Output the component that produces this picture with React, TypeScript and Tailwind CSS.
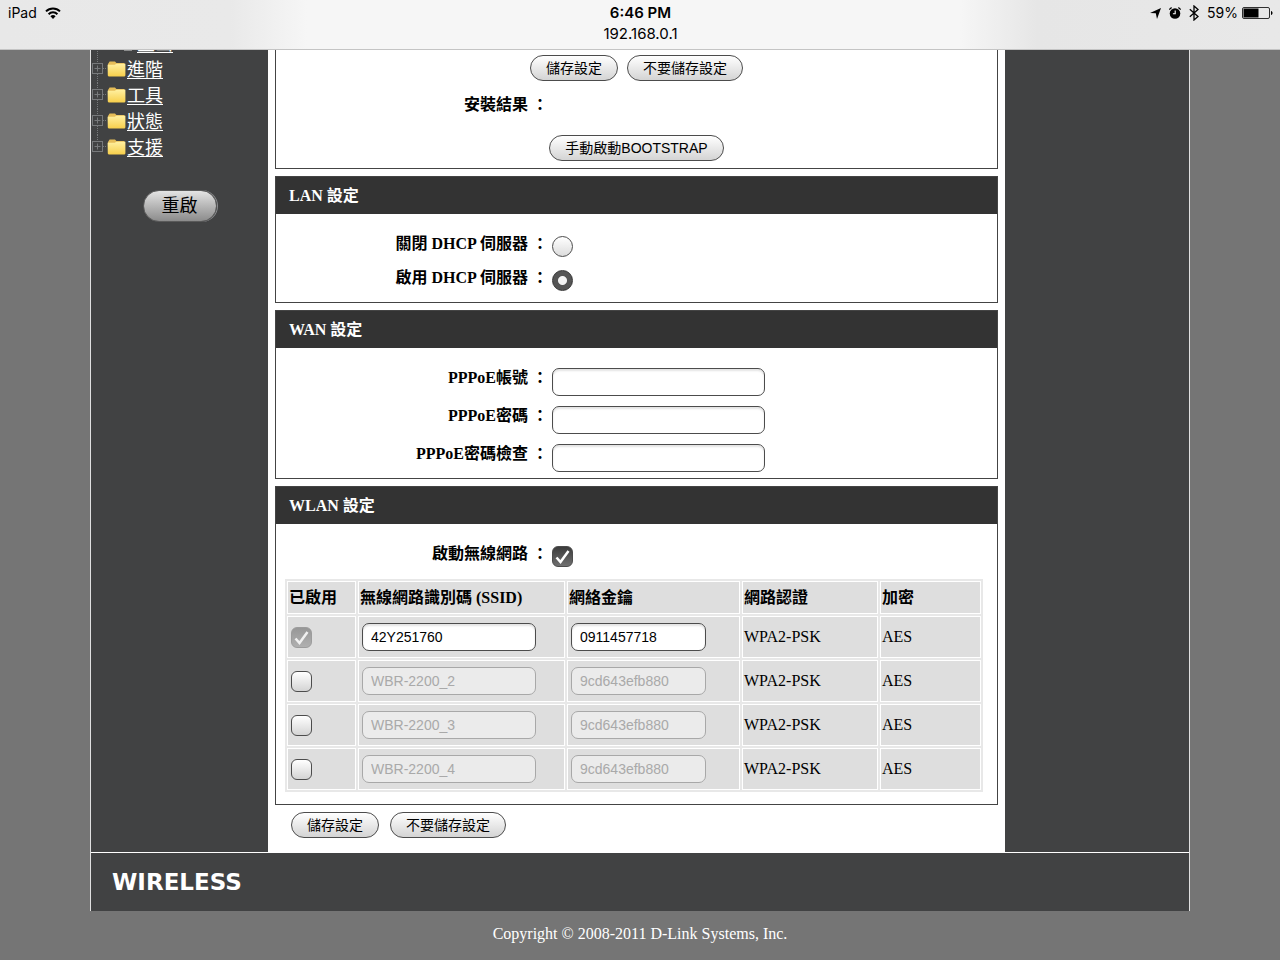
import React, { useState } from 'react';

const NAV_ITEMS = ['進階', '工具', '狀態', '支援'];

const COLUMNS = [
  { title: '已啟用', width: 'w-[69px]' },
  { title: '無線網路識別碼 (SSID)', width: 'w-[207px]' },
  { title: '網絡金鑰', width: 'w-[173px]' },
  { title: '網路認證', width: 'w-[136px]' },
  { title: '加密', width: '' },
];

interface Network {
  ssid: string;
  networkKey: string;
  enabled: boolean;
  locked: boolean;
}

const NETWORKS: Network[] = [
  { ssid: '42Y251760', networkKey: '0911457718', enabled: true, locked: true },
  { ssid: 'WBR-2200_2', networkKey: '9cd643efb880', enabled: false, locked: false },
  { ssid: 'WBR-2200_3', networkKey: '9cd643efb880', enabled: false, locked: false },
  { ssid: 'WBR-2200_4', networkKey: '9cd643efb880', enabled: false, locked: false },
];

const StatusBar: React.FC = () => (
  <header className="grid h-[50px] grid-cols-3 items-start border-b border-[#c4c4c4] bg-[linear-gradient(to_right,#e8e8e8_0%,#e9e9e9_18%,#f6f6f6_24%,#f6f6f6_75%,#e6e6e6_81%,#e8e8e8_100%)] pt-1 pr-[7px] pl-2 font-[Inter,sans-serif] text-sm leading-[18px] text-black">
    <div className="flex items-center gap-2">
      <span>iPad</span>
      <svg width="16" height="12" viewBox="0 0 16 12" fill="none" stroke="#000" strokeWidth="2">
        <path d="M1 4.4a10 10 0 0 1 14 0" />
        <path d="M3.6 7.2a6.2 6.2 0 0 1 8.8 0" />
        <path d="M8 12L5.4 9.3a3.7 3.7 0 0 1 5.2 0z" fill="#000" stroke="none" />
      </svg>
    </div>
    <div className="flex flex-col items-center text-[15px]">
      <span className="leading-[18px] font-semibold">6:46 PM</span>
      <span className="leading-6">192.168.0.1</span>
    </div>
    <div className="flex items-center justify-end gap-2">
      <svg width="11" height="11" viewBox="0 0 11 11">
        <path d="M11 0L7 11L5.8 5.2L0 5z" />
      </svg>
      <svg width="12" height="12" viewBox="0 0 12 12">
        <circle cx="6" cy="6.5" r="5.3" />
        <path d="M.3 2.6L2.6.5M11.7 2.6L9.4.5" stroke="#000" strokeWidth="1.2" />
        <path d="M6.2 3.4v3.4H3.9" stroke="#fff" strokeWidth="1.1" fill="none" />
      </svg>
      <svg width="10" height="16" viewBox="0 0 10 16" fill="none" stroke="#000" strokeWidth="1.3">
        <path d="M.8 4.3L9 11.5L5 15V1L9 4.5L.8 11.7" />
      </svg>
      <span>59%</span>
      <svg className="-ml-1" width="31" height="12" viewBox="0 0 31 12">
        <rect x=".5" y=".5" width="27" height="11" rx="1.5" fill="none" stroke="#000" strokeWidth=".8" />
        <rect x="1.5" y="1.5" width="15" height="9" />
        <path d="M29 4c2 .6 2 3.4 0 4z" />
      </svg>
    </div>
  </header>
);

const FolderIcon: React.FC = () => (
  <svg width="19" height="18" viewBox="0 0 19 18">
    <defs>
      <linearGradient id="folder" x1="0" y1="0" x2="0" y2="1">
        <stop offset="0" stopColor="#fff0a0" />
        <stop offset="1" stopColor="#f7cf4c" />
      </linearGradient>
    </defs>
    <path d="M1 3L2.6.6H8L9.4 2H17.5V7H1z" fill="#e6bd58" />
    <path d="M.6 3.8H7.8L9.4 2.8H18.4V14.6L17.6 15.4H1.6L.8 14.6z" fill="url(#folder)" />
  </svg>
);

const BranchIcon: React.FC<{ last: boolean }> = ({ last }) => (
  <svg width="16" height="26" viewBox="0 0 16 26" fill="none" stroke="#77797b">
    <path d={last ? 'M6.5 0V6' : 'M6.5 0V6M6.5 17V26'} strokeDasharray="1 1" />
    <path d="M12 11.5H16" strokeDasharray="1 1" />
    <rect x="1.5" y="6.5" width="10" height="10" />
    <path d="M3.5 11.5H9.5M6.5 8.5V14.5" />
  </svg>
);

const Sidebar: React.FC = () => (
  <nav className="w-[177px] shrink-0 font-[Liberation_Sans,Noto_Sans_CJK_TC,sans-serif]">
    {/* last child of the first branch, scrolled under the status bar */}
    <div className="flex h-[7px] items-end overflow-hidden">
      <svg width="46" height="26" viewBox="0 0 46 26" fill="none">
        <path d="M6.5 0V26" stroke="#77797b" strokeDasharray="1 1" />
        <path d="M33 4H41V19.5H33z" fill="#d8d8d8" />
      </svg>
      <a href="#logout" className="text-lg leading-[26px] text-white underline underline-offset-2">登出</a>
    </div>
    <ul>
      {NAV_ITEMS.map((item, index) => (
        <li key={item} className="flex h-[26px] items-center">
          <BranchIcon last={index === NAV_ITEMS.length - 1} />
          <FolderIcon />
          <a href={`#${item}`} className="pl-px text-lg leading-[26px] text-white underline underline-offset-2">
            {item}
          </a>
        </li>
      ))}
    </ul>
    <div className="flex justify-center pt-[29px]">
      <button
        type="button"
        className="h-8 rounded-full border border-[#5a5a5a] bg-linear-to-b from-[#e4e4e4] to-[#8c8c8c] px-[18px] text-lg leading-7 text-black shadow-[1px_0_0_0_#8c8e90]"
      >
        重啟
      </button>
    </div>
  </nav>
);

const PillButton: React.FC<{ children: React.ReactNode }> = ({ children }) => (
  <button
    type="button"
    className="h-[26px] rounded-full border border-[#4c4c4c] bg-linear-to-b from-white to-[#d4d4d4] px-[15px] font-[Liberation_Sans,Noto_Sans_CJK_TC,sans-serif] text-sm leading-6 text-black"
  >
    {children}
  </button>
);

const Panel: React.FC<{ title: string; children: React.ReactNode }> = ({ title, children }) => (
  <section className="border border-[#444]">
    <h2 className="bg-[#333] px-[13px] text-base leading-[37px] font-bold text-white">{title}</h2>
    {children}
  </section>
);

const labelClass = 'w-[272px] shrink-0 text-right text-base leading-6 font-bold';

interface FieldProps {
  id: string;
  label: string;
  children: React.ReactNode;
}

const Field: React.FC<FieldProps> = ({ id, label, children }) => (
  <div className="flex items-start">
    <label htmlFor={id} className={labelClass}>
      {label} ：
    </label>
    <div className="flex min-h-[27px] items-center pt-[2px] pl-1">{children}</div>
  </div>
);

const Radio: React.FC<{ id: string; checked: boolean; onChange: () => void }> = ({ id, checked, onChange }) => (
  <input
    id={id}
    type="radio"
    name="dhcp"
    checked={checked}
    onChange={onChange}
    className={`size-[21px] appearance-none rounded-full border ${
      checked
        ? 'border-[#333] bg-[radial-gradient(circle,#f4f4f4_0_4px,#555_5px)]'
        : 'border-[#4c4c4c] bg-linear-to-b from-white to-[#dcdcdc]'
    }`}
  />
);

interface TickBoxProps {
  id: string;
  label?: string;
  checked: boolean;
  disabled?: boolean;
  onChange: () => void;
}

const TickBox: React.FC<TickBoxProps> = ({ id, label, checked, disabled, onChange }) => (
  <span className="grid size-[21px]">
    <input
      id={id}
      type="checkbox"
      aria-label={label}
      checked={checked}
      disabled={disabled}
      onChange={onChange}
      className="col-start-1 row-start-1 size-[21px] appearance-none rounded-md border border-[#4c4c4c] bg-linear-to-b from-white to-[#d4d4d4] checked:from-[#3c3c3c] checked:to-[#707070] disabled:border-[#9c9c9c] disabled:from-[#979797] disabled:to-[#b0b0b0]"
    />
    {checked && (
      <svg
        className="pointer-events-none col-start-1 row-start-1"
        width="21"
        height="21"
        viewBox="0 0 21 21"
        fill="none"
        stroke={disabled ? '#f0f0f0' : '#fff'}
        strokeWidth="2.5"
      >
        <path d="M4.5 11.5L8.5 16L16.5 5" />
      </svg>
    )}
  </span>
);

const inputClass =
  'h-7 rounded-[7px] border border-[#4c4c4c] bg-white px-2 font-[Liberation_Sans,sans-serif] text-sm text-black shadow-[inset_0_2px_2px_#e4e4e4] disabled:border-[#a8a8a8] disabled:bg-[#ebebeb] disabled:text-[#a9a9a9] disabled:shadow-none';

const cellClass = 'border border-white bg-[#dedede] px-px text-left align-middle';

const App: React.FC = () => {
  const [dhcpEnabled, setDhcpEnabled] = useState(true);
  const [wirelessEnabled, setWirelessEnabled] = useState(true);
  const [networks, setNetworks] = useState(NETWORKS);

  const updateNetwork = (index: number, change: Partial<Network>) => {
    setNetworks(prev => prev.map((network, i) => (i === index ? { ...network, ...change } : network)));
  };

  return (
    <div className="min-h-screen bg-[#757575] font-[Liberation_Serif,Noto_Sans_CJK_TC,serif] text-black">
      <StatusBar />

      <div className="mx-auto max-w-[1100px] border-x border-[#e0e0e0] bg-[#414243]">
        <div className="flex">
          <Sidebar />

          <main className="flex min-w-0 grow flex-col gap-[7px] bg-white px-[7px] pb-[14px]">
            <section className="border border-t-0 border-[#444] pt-[5px] pb-[7px]">
              <div className="flex justify-center gap-[9px]">
                <PillButton>儲存設定</PillButton>
                <PillButton>不要儲存設定</PillButton>
              </div>
              <p className={`${labelClass} pt-3`}>安裝結果 ：</p>
              <div className="flex justify-center pt-[18px]">
                <PillButton>手動啟動BOOTSTRAP</PillButton>
              </div>
            </section>

            <Panel title="LAN 設定">
              <div className="flex flex-col gap-[7px] pt-[18px] pb-[9px]">
                <Field id="dhcp-off" label="關閉 DHCP 伺服器">
                  <Radio id="dhcp-off" checked={!dhcpEnabled} onChange={() => setDhcpEnabled(false)} />
                </Field>
                <Field id="dhcp-on" label="啟用 DHCP 伺服器">
                  <Radio id="dhcp-on" checked={dhcpEnabled} onChange={() => setDhcpEnabled(true)} />
                </Field>
              </div>
            </Panel>

            <Panel title="WAN 設定">
              <div className="flex flex-col gap-2 pt-[18px] pb-[6px]">
                <Field id="pppoe-user" label="PPPoE帳號">
                  <input id="pppoe-user" type="text" className={`${inputClass} w-[213px]`} />
                </Field>
                <Field id="pppoe-password" label="PPPoE密碼">
                  <input id="pppoe-password" type="password" className={`${inputClass} w-[213px]`} />
                </Field>
                <Field id="pppoe-confirm" label="PPPoE密碼檢查">
                  <input id="pppoe-confirm" type="password" className={`${inputClass} w-[213px]`} />
                </Field>
              </div>
            </Panel>

            <Panel title="WLAN 設定">
              <div className="pt-[18px] pb-[10px]">
                <Field id="wireless" label="啟動無線網路">
                  <TickBox
                    id="wireless"
                    checked={wirelessEnabled}
                    onChange={() => setWirelessEnabled(!wirelessEnabled)}
                  />
                </Field>
              </div>
              <div className="pr-[14px] pb-3 pl-[9px]">
                <table className="w-full table-fixed border-separate border-spacing-[2px] bg-[#e8e8e8]">
                  <thead>
                    <tr className="h-[33px]">
                      {COLUMNS.map(column => (
                        <th key={column.title} scope="col" className={`${cellClass} ${column.width} whitespace-nowrap`}>
                          {column.title}
                        </th>
                      ))}
                    </tr>
                  </thead>
                  <tbody>
                    {networks.map((network, index) => {
                      const inactive = !network.enabled;
                      return (
                        <tr key={index} className="h-[42px]">
                          <td className={cellClass}>
                            <div className="pl-[2px]">
                              <TickBox
                                id={`enabled-${index}`}
                                label="已啟用"
                                checked={network.enabled}
                                disabled={network.locked}
                                onChange={() => updateNetwork(index, { enabled: !network.enabled })}
                              />
                            </div>
                          </td>
                          <td className={cellClass}>
                            <input
                              type="text"
                              aria-label="無線網路識別碼 (SSID)"
                              value={network.ssid}
                              disabled={inactive}
                              onChange={e => updateNetwork(index, { ssid: e.target.value })}
                              className={`${inputClass} ml-[2px] block w-[174px]`}
                            />
                          </td>
                          <td className={cellClass}>
                            <input
                              type="text"
                              aria-label="網絡金鑰"
                              value={network.networkKey}
                              disabled={inactive}
                              onChange={e => updateNetwork(index, { networkKey: e.target.value })}
                              className={`${inputClass} ml-[2px] block w-[135px]`}
                            />
                          </td>
                          <td className={cellClass}>WPA2-PSK</td>
                          <td className={cellClass}>AES</td>
                        </tr>
                      );
                    })}
                  </tbody>
                </table>
              </div>
            </Panel>

            <div className="flex gap-[11px] pl-4">
              <PillButton>儲存設定</PillButton>
              <PillButton>不要儲存設定</PillButton>
            </div>
          </main>

          <div className="w-[184px] shrink-0" />
        </div>

        <div className="flex h-[59px] items-center border-t border-white pl-[21px]">
          <span className="font-[DejaVu_Sans,sans-serif] text-[23px] leading-6 font-bold text-white">WIRELESS</span>
        </div>
      </div>

      <footer className="pt-[11px] text-center text-base leading-6 text-white">
        Copyright © 2008-2011 D-Link Systems, Inc.
      </footer>
    </div>
  );
};

export default App;
